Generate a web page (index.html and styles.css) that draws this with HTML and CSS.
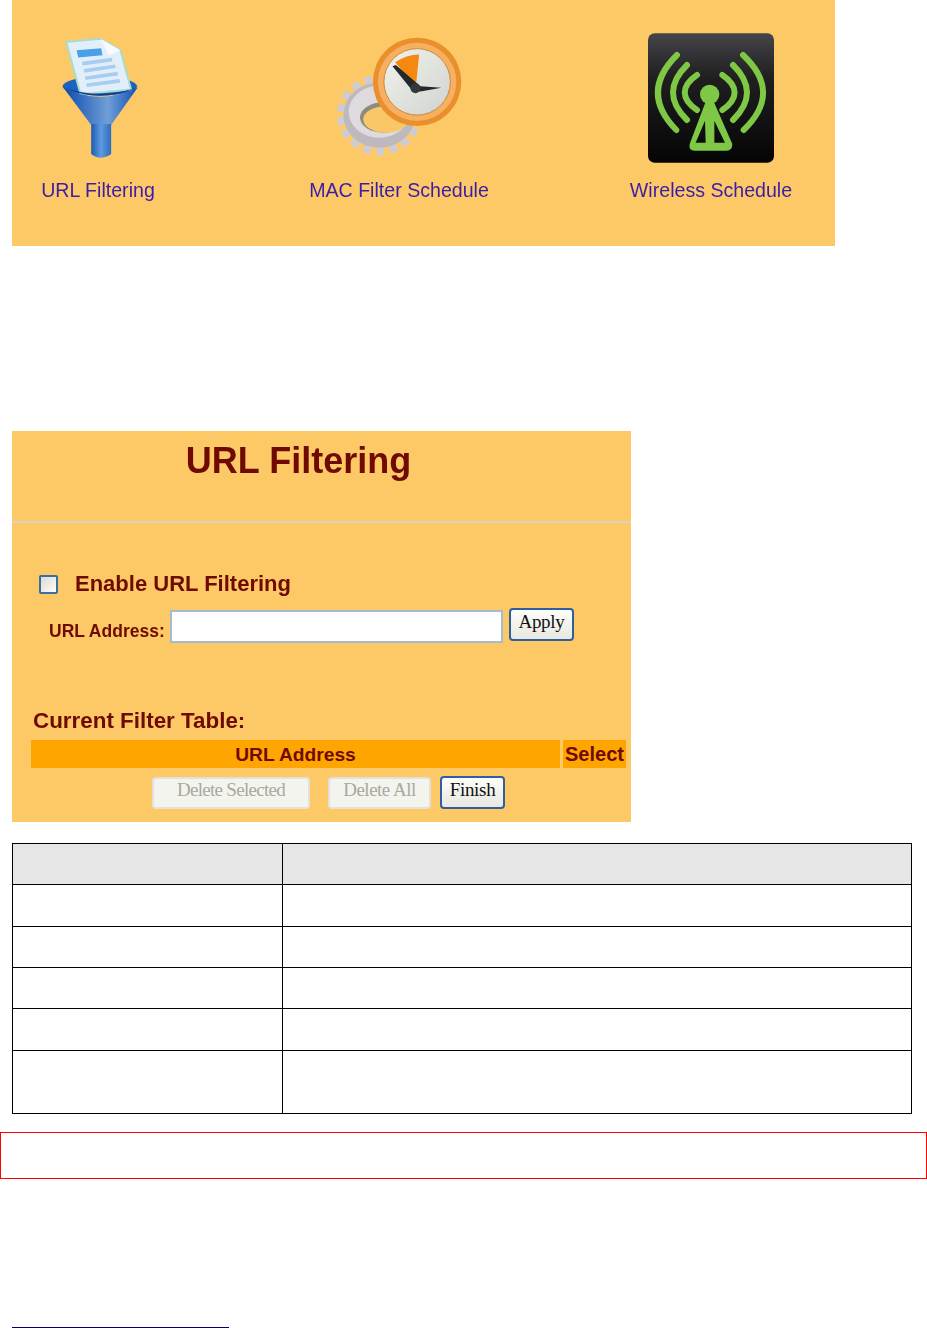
FILE: index.html
```html
<!DOCTYPE html>
<html lang="en">
<head>
    <meta charset="UTF-8">
    <meta name="viewport" content="width=device-width, initial-scale=1.0">
    <title>URL Filtering</title>
    <link rel="stylesheet" href="styles.css">
</head>
<body>
    <div class="menu-panel">
        <a class="menu-item" href="#">
            <svg class="icon icon-filter" viewBox="185 110 230 370">
                <defs>
                    <linearGradient id="coneBlue" x1="0" x2="1" y1="0" y2="0">
                        <stop offset="0" stop-color="#0c4aae"/>
                        <stop offset="0.6" stop-color="#6f9fd8"/>
                        <stop offset="1" stop-color="#1050b4"/>
                    </linearGradient>
                    <linearGradient id="tubeBlue" x1="0" x2="1" y1="0" y2="0">
                        <stop offset="0" stop-color="#1a5cb4"/>
                        <stop offset="0.5" stop-color="#5f9ae0"/>
                        <stop offset="1" stop-color="#2a6cc0"/>
                    </linearGradient>
                </defs>
                <ellipse cx="298" cy="258" rx="112" ry="28" fill="#1f62bd"/>
                <polygon points="197,125 300,115 360,150 392,268 240,282" fill="#e2effa" stroke="#a8dcd0" stroke-width="6"/>
                <polygon points="228,150 302,144 306,165 233,172" fill="#4aa0e6"/>
                <polygon points="300,115 360,150 325,165" fill="#f7fbff"/>
                <path d="M245 190 L335 178 M250 212 L345 198 M254 234 L352 220 M258 255 L358 242" stroke="#a9cdf0" stroke-width="11"/>
                <path d="M188 262 Q298 318 412 262 L332 375 L272 375 Z" fill="url(#coneBlue)"/>
                <path d="M272 372 L332 372 L332 462 Q300 485 272 462 Z" fill="url(#tubeBlue)"/>
                <path d="M190 262 Q298 312 410 262 Q298 300 190 262 Z" fill="#0c3f9c"/>
            </svg>
            <span class="menu-label">URL Filtering</span>
        </a>
        <a class="menu-item" href="#">
            <svg class="icon icon-clock" viewBox="105 105 385 365">
                <defs>
                    <linearGradient id="faceGrey" x1="0" x2="1" y1="0" y2="1">
                        <stop offset="0" stop-color="#f2f2ea"/>
                        <stop offset="1" stop-color="#cfd3d0"/>
                    </linearGradient>
                </defs>
                <ellipse cx="238" cy="345" rx="115" ry="108" fill="none" stroke="#cfcbd2" stroke-width="24" stroke-dasharray="24 16"/>
                <ellipse cx="238" cy="345" rx="108" ry="98" fill="#bdb9bf"/>
                <ellipse cx="238" cy="335" rx="92" ry="78" fill="#dedade"/>
                <ellipse cx="252" cy="352" rx="72" ry="46" fill="#8d8a80"/>
                <ellipse cx="258" cy="358" rx="68" ry="40" fill="#f9c766"/>
                <circle cx="352" cy="245" r="133" fill="#e98f2c"/>
                <circle cx="352" cy="245" r="118" fill="#f6b060"/>
                <circle cx="352" cy="245" r="100" fill="url(#faceGrey)" stroke="#c98a40" stroke-width="3"/>
                <path d="M348 262 L286 186 Q320 164 358 163 Z" fill="#f5890f"/>
                <path d="M278 198 L288 194 L362 258 L425 263 L362 274 L338 272 Z" fill="#23282c"/>
                <circle cx="347" cy="264" r="15" fill="#33383c"/>
            </svg>
            <span class="menu-label">MAC Filter Schedule</span>
        </a>
        <a class="menu-item" href="#">
            <svg class="icon icon-wireless" viewBox="145 100 378 388">
                <defs>
                    <linearGradient id="tileDark" x1="0" x2="0" y1="0" y2="1">
                        <stop offset="0" stop-color="#44444a"/>
                        <stop offset="0.35" stop-color="#1f1f20"/>
                        <stop offset="1" stop-color="#050505"/>
                    </linearGradient>
                </defs>
                <rect x="145" y="100" width="378" height="388" rx="20" fill="url(#tileDark)"/>
                <g fill="none" stroke="#7ec845" stroke-width="18" stroke-linecap="round">
                    <path d="M292 225 C243 258 243 297 292 330"/>
                    <path d="M262 195 C206 250 206 305 262 360"/>
                    <path d="M232 165 C156 240 156 315 230 390"/>
                    <path d="M368 225 C417 258 417 297 368 330"/>
                    <path d="M400 195 C456 250 456 305 400 360"/>
                    <path d="M430 165 C510 240 510 315 432 390"/>
                </g>
                <circle cx="330" cy="283" r="29" fill="#7ec845"/>
                <path fill-rule="evenodd" fill="#7ec845" d="M320 300 L340 300 L398 432 Q398 452 380 452 L285 452 Q266 452 270 432 Z M316 362 L288 428 L318 428 Z M344 362 L344 428 L376 428 Z"/>
            </svg>
            <span class="menu-label">Wireless Schedule</span>
        </a>
    </div>

    <div class="form-panel">
        <h1 class="form-title">URL Filtering</h1>
        <div class="form-rule"></div>
        <div class="enable-row">
            <span class="check-box"></span>
            <span class="enable-label">Enable URL Filtering</span>
        </div>
        <div class="address-row">
            <span class="address-label">URL Address:</span>
            <span class="address-input"></span>
            <span class="btn btn-apply">Apply</span>
        </div>
        <h2 class="table-title">Current Filter Table:</h2>
        <div class="filter-head">
            <span class="head-url">URL Address</span>
            <span class="head-select">Select</span>
        </div>
        <div class="button-row">
            <span class="btn btn-off btn-selected">Delete Selected</span>
            <span class="btn btn-off btn-all">Delete All</span>
            <span class="btn btn-finish">Finish</span>
        </div>
    </div>

    <table class="spec-table">
        <tr class="row-head"><th></th><th></th></tr>
        <tr class="row-a"><td></td><td></td></tr>
        <tr class="row-b"><td></td><td></td></tr>
        <tr class="row-b"><td></td><td></td></tr>
        <tr class="row-a"><td></td><td></td></tr>
        <tr class="row-tall"><td></td><td></td></tr>
    </table>

    <div class="note-box"></div>
    <div class="foot-rule"></div>
</body>
</html>
```
FILE: styles.css
```css
* {
    margin: 0;
    padding: 0;
    box-sizing: border-box;
}

html, body {
    height: 1328px;
    overflow: hidden;
}

body {
    font-family: "Liberation Sans", Arial, sans-serif;
    background: white;
}

/* top icon panel */
.menu-panel {
    display: grid;
    grid-template-columns: 172px 430px 194px;
    width: 823px;
    height: 246px;
    margin-left: 12px;
    padding-top: 33px;
    background: #fdc966;
}

.menu-item {
    display: flex;
    flex-direction: column;
    align-items: center;
    text-decoration: none;
}

.icon {
    display: block;
    height: 130px;
    filter: blur(0.6px);
}

.icon-filter {
    width: 77px;
    height: 123px;
    margin-top: 4px;
    margin-bottom: 3px;
    margin-left: 4px;
}

.icon-clock {
    width: 128px;
    height: 122px;
    margin-top: 2px;
    margin-bottom: 6px;
}

.icon-wireless {
    width: 126px;
}

.menu-label {
    margin-top: 15px;
    font-size: 19.6px;
    line-height: 24px;
    color: #3c1ea6;
    filter: blur(0.4px);
    white-space: nowrap;
}

/* form panel */
.form-panel {
    width: 619px;
    height: 391px;
    margin-top: 185px;
    margin-left: 12px;
    padding-top: 10px;
    background: #fdc966;
    color: #6f0a00;
}

.form-title {
    width: 573px;
    font-size: 36px;
    line-height: 40px;
    text-align: center;
    filter: blur(0.5px);
}

.form-rule {
    height: 2px;
    margin-top: 40px;
    background: #d9d3c0;
}

.enable-row {
    display: flex;
    align-items: center;
    gap: 17px;
    margin-top: 49px;
    padding-left: 27px;
}

.check-box {
    width: 19px;
    height: 19px;
    border: 2px solid #3a6f9e;
    border-radius: 2px;
    background: linear-gradient(135deg, #dcdcd4, #fdfdfb);
}

.enable-label {
    font-size: 22px;
    font-weight: bold;
    line-height: 24px;
    filter: blur(0.4px);
}

.address-row {
    display: flex;
    align-items: flex-start;
    margin-top: 12px;
    padding-left: 37px;
}

.address-label {
    width: 121px;
    margin-top: 13px;
    font-size: 17.5px;
    font-weight: bold;
    white-space: nowrap;
    filter: blur(0.4px);
}

.address-input {
    width: 333px;
    height: 33px;
    margin-top: 2px;
    border: 2px solid #a3bcd0;
    background: white;
}

.btn {
    display: flex;
    align-items: center;
    justify-content: center;
    font-family: "Liberation Serif", "Times New Roman", serif;
    font-size: 19px;
    letter-spacing: -0.3px;
    color: #111;
    white-space: nowrap;
}

.btn-apply,
.btn-finish {
    border: 2px solid #2f5f9e;
    border-radius: 4px;
    background: linear-gradient(#fdfdfb, #e8e8e0);
}

.btn-apply {
    width: 65px;
    height: 33px;
    margin-left: 6px;
    padding-bottom: 5px;
}

.table-title {
    margin-top: 66px;
    padding-left: 21px;
    font-size: 22.4px;
    line-height: 24px;
    filter: blur(0.4px);
}

.filter-head {
    display: flex;
    gap: 3px;
    margin-top: 7px;
    padding-left: 19px;
    font-size: 20px;
    font-weight: bold;
}

.head-url,
.head-select {
    display: block;
    height: 28px;
    line-height: 29px;
    text-align: center;
    background: #ffa500;
}

.head-url {
    width: 529px;
    font-size: 19.2px;
}

.head-select {
    width: 63px;
    white-space: nowrap;
}

.button-row {
    display: flex;
    margin-top: 8px;
    padding-left: 140px;
}

.btn-off {
    height: 32px;
    margin-top: 1px;
    padding-bottom: 6px;
    border: 2px solid #e4e2d8;
    border-radius: 4px;
    background: #f4f4ee;
    color: #aaa89e;
}

.btn-selected {
    width: 158px;
    letter-spacing: -0.7px;
}

.btn-all {
    width: 103px;
    margin-left: 18px;
    letter-spacing: -0.5px;
}

.btn-finish {
    width: 65px;
    height: 33px;
    margin-left: 9px;
    padding-bottom: 5px;
}

/* empty table */
.spec-table {
    width: 900px;
    margin-top: 21px;
    margin-left: 12px;
    border-collapse: collapse;
    table-layout: fixed;
}

.spec-table th,
.spec-table td {
    border: 1px solid black;
}

.spec-table th:first-child,
.spec-table td:first-child {
    width: 270px;
}

.row-head th {
    background: #e6e6e6;
}

.row-head {
    height: 41px;
}

.row-a {
    height: 42px;
}

.row-b {
    height: 41px;
}

.row-tall {
    height: 63px;
}

.note-box {
    height: 47px;
    margin-top: 18px;
    border: 1px solid red;
}

.foot-rule {
    width: 217px;
    height: 1px;
    margin-top: 148px;
    margin-left: 12px;
    background: #000060;
}
```
